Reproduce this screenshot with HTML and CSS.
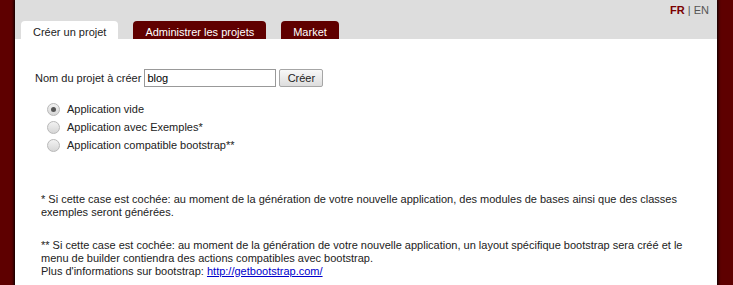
FILE: index.html
```html
<!DOCTYPE html>
<html lang="fr">
<head>
    <meta charset="UTF-8">
    <title>Builder - Créer un projet</title>
    <link rel="stylesheet" href="styles.css">
</head>
<body>
    <div class="page">
        <!-- Header with language switch and tabs -->
        <div class="header">
            <div class="lang">
                <a href="#" class="lang-active">FR</a> | <a href="#">EN</a>
            </div>
            <ul class="tabs">
                <li class="tab tab-active"><a href="#">Créer un projet</a></li>
                <li class="tab"><a href="#">Administrer les projets</a></li>
                <li class="tab"><a href="#">Market</a></li>
            </ul>
        </div>

        <!-- Project creation form -->
        <div class="content">
            <form class="create-form" action="#" method="post">
                <div class="name-row">
                    <label for="project_name">Nom du projet à créer</label>
                    <input type="text" id="project_name" name="project_name" value="blog">
                    <button type="submit">Créer</button>
                </div>
                <div class="options">
                    <label class="option"><input type="radio" name="type" value="empty" checked> Application vide</label>
                    <label class="option"><input type="radio" name="type" value="examples"> Application avec Exemples*</label>
                    <label class="option"><input type="radio" name="type" value="bootstrap"> Application compatible bootstrap**</label>
                </div>
            </form>

            <p class="note">* Si cette case est cochée: au moment de la génération de votre nouvelle application, des modules de bases ainsi que des classes exemples seront générées.</p>

            <p class="note">** Si cette case est cochée: au moment de la génération de votre nouvelle application, un layout spécifique bootstrap sera créé et le menu de builder contiendra des actions compatibles avec bootstrap.<br>
            Plus d'informations sur bootstrap: <a href="http://getbootstrap.com/">http://getbootstrap.com/</a></p>
        </div>
    </div>
</body>
</html>
```

FILE: styles.css
```css
/* Page background */
body {
    margin: 0;
    background-color: #5e0000;
    font-family: "Liberation Sans", Arial, sans-serif;
    font-size: 11px;
    color: #222;
}

/* Main white column with dark edge */
.page {
    width: 702px;
    margin-left: 15px;
    min-height: 285px;
    background-color: #fff;
    box-shadow: 0 0 3px 1px #000;
}

/* Grey header band */
.header {
    height: 39px;
    background-color: #dddddd;
    display: flex;
    flex-direction: column;
    justify-content: space-between;
}

.lang {
    align-self: flex-end;
    padding: 4px 8px 0 0;
    font-size: 11px;
    color: #555;
}

.lang a {
    color: #555;
    text-decoration: none;
}

.lang a.lang-active {
    color: #7a0000;
    font-weight: bold;
}

/* Tabs */
.tabs {
    list-style: none;
    margin: 0;
    padding: 0 0 0 6px;
    display: flex;
    gap: 15px;
}

.tab a {
    display: block;
    height: 18px;
    line-height: 22px;
    padding: 0 12px;
    background-color: #600000;
    color: #fff;
    text-decoration: none;
    border-radius: 4px 4px 0 0;
}

.tab-active a {
    background-color: #fff;
    color: #222;
}

/* Content area */
.content {
    padding: 30px 20px 10px 20px;
}

.name-row {
    display: flex;
    align-items: center;
    gap: 3px;
}

.name-row input[type="text"] {
    width: 132px;
    height: 18px;
    box-sizing: border-box;
    margin: 0;
    padding: 1px 2px;
    border: 1px solid #999;
    font-family: inherit;
    font-size: 11px;
    color: #000;
}

.name-row button {
    width: 44px;
    height: 18px;
    margin: 0;
    padding: 0;
    font-family: inherit;
    font-size: 11px;
    color: #222;
    background: linear-gradient(#f8f8f8, #dddddd);
    border: 1px solid #a6a6a6;
    border-radius: 2px;
}

.options {
    margin-top: 13px;
    padding-left: 12px;
}

.option {
    display: flex;
    align-items: center;
    height: 18px;
    line-height: 18px;
    gap: 7px;
}

/* Grey radio buttons */
.option input {
    appearance: none;
    margin: 0;
    width: 13px;
    height: 13px;
    border: 1px solid #b8b8b8;
    border-radius: 50%;
    background: linear-gradient(#f2f2f2, #d6d6d6);
    box-sizing: border-box;
    position: relative;
}

.option input:checked::after {
    content: "";
    position: absolute;
    left: 3px;
    top: 3px;
    width: 5px;
    height: 5px;
    border-radius: 50%;
    background-color: #555;
}

/* Footnotes */
.note {
    margin: 39px 0 0 6px;
    font-size: 11px;
    line-height: 13px;
}

.note + .note {
    margin-top: 20px;
}

.note a {
    color: #00c;
}
```
